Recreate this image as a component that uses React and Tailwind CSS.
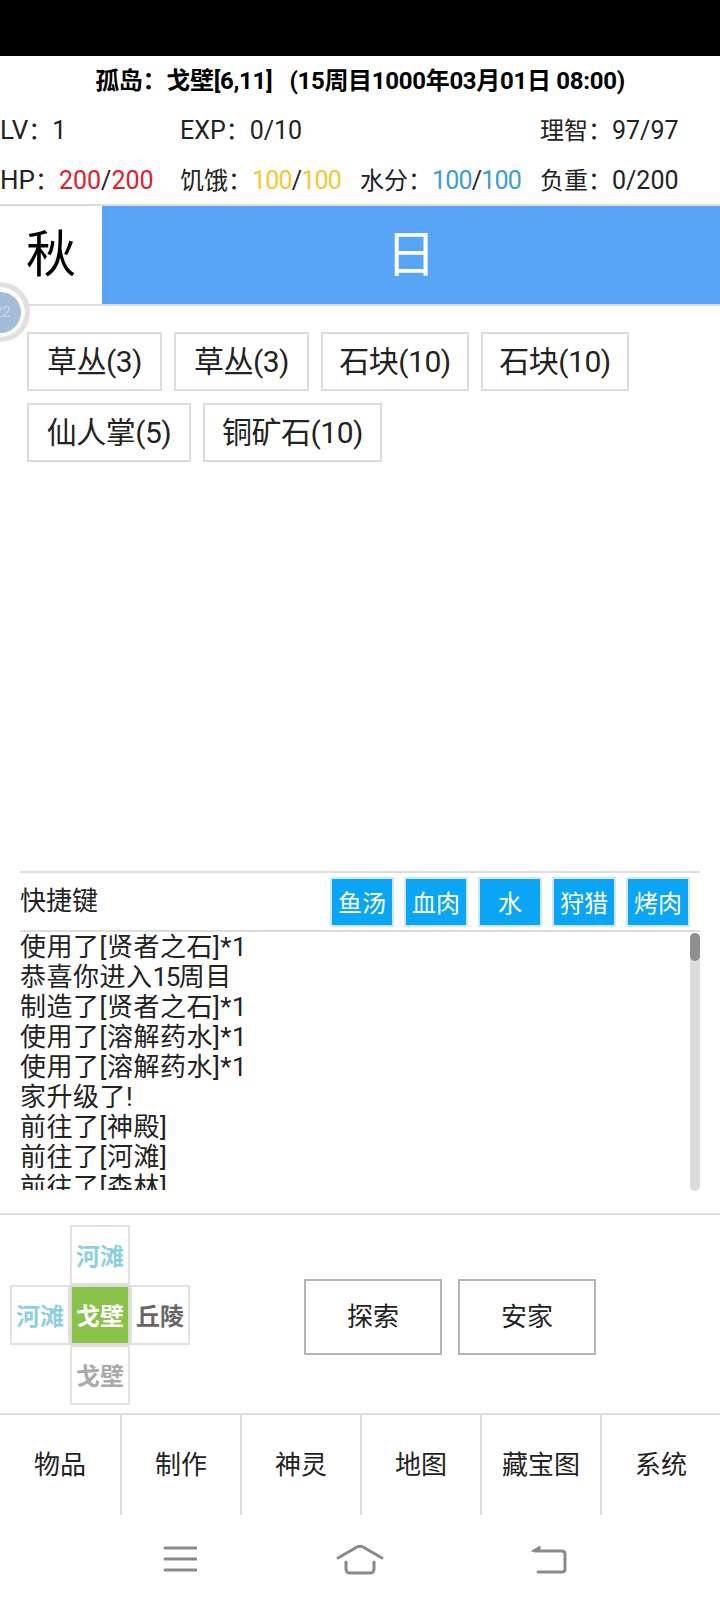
import React from "react";

const items = [
  [
    { t: "草丛(3)", w: "w-[135px]" },
    { t: "草丛(3)", w: "w-[135px]" },
    { t: "石块(10)", w: "w-[148px]" },
    { t: "石块(10)", w: "w-[148px]" },
  ],
  [
    { t: "仙人掌(5)", w: "w-[164px]" },
    { t: "铜矿石(10)", w: "w-[179px]" },
  ],
];
const shortcuts = ["鱼汤", "血肉", "水", "狩猎", "烤肉"];
const logs = [
  "使用了[贤者之石]*1",
  <>恭喜你进入<span className="tracking-[-1.5px]">15</span>周目</>,
  "制造了[贤者之石]*1",
  "使用了[溶解药水]*1",
  "使用了[溶解药水]*1",
  "家升级了!",
  "前往了[神殿]",
  "前往了[河滩]",
  "前往了[森林]",
];
const tabs = ["物品", "制作", "神灵", "地图", "藏宝图", "系统"];

const Stat = ({ label, value, max, color, tight }) => (
  <div className="w-[180px] whitespace-nowrap">
    {label}：
    <span className={tight ? "text-[25px] tracking-[-0.8px]" : "text-[25px]"}>
      <span className={color}>{value}</span>/<span className={color}>{max}</span>
    </span>
  </div>
);

const MapCell = ({ text, className }) => (
  <div className={`w-[60px] h-[60px] pt-[3px] flex items-center justify-center border-2 text-[24px] font-bold ${className}`}>
    {text}
  </div>
);

const App = () => {
  return (
    <div className="relative w-[720px] h-[1600px] bg-white overflow-hidden flex flex-col text-black font-['Roboto','Noto_Sans_CJK_SC',sans-serif]">
      <div className="h-14 bg-black shrink-0" />

      <div className="h-[48px] pt-[1px] flex items-center justify-center text-[24px] font-bold whitespace-pre tracking-[-0.3px]">
        孤岛：戈壁[6,11]{"   "}(15周目1000年03月01日 08:00)
      </div>
      <div className="h-[50px] pt-[3px] flex items-center text-[24px] text-[#222]">
        <div className="w-[180px]"><span className="text-[26px]">LV</span>：<span className="text-[25px]">1</span></div>
        <div className="w-[360px]"><span className="text-[25px]">EXP</span>：<span className="text-[25px]">0/10</span></div>
        <div className="w-[180px]">理智：<span className="text-[25px]">97/97</span></div>
      </div>
      <div className="h-[50px] pt-[3px] flex items-center text-[24px] text-[#222]">
        <Stat label={<span className="text-[26px]">HP</span>} value="200" max="200" color="text-[#e0202a]" />
        <Stat label="饥饿" value="100" max="100" color="text-[#f2c933]" tight />
        <Stat label="水分" value="100" max="100" color="text-[#3d9bdc]" tight />
        <div className="w-[180px]">负重：<span className="text-[25px]">0/200</span></div>
      </div>

      <div className="h-[102px] flex border-y-2 border-[#dddddd] shrink-0">
        <div className="w-[102px] flex items-center justify-center text-[50px]">秋</div>
        <div className="flex-1 bg-[#58a5f8] text-white flex items-center justify-center text-[50px]">日</div>
      </div>

      <div className="h-[565px] pt-[26px] pl-[27px] flex flex-col gap-3 shrink-0">
        {items.map((row, i) => (
          <div key={i} className="flex gap-3">
            {row.map((item, j) => (
              <div key={j} className={`${item.w} h-[59px] flex items-center justify-center border-2 border-[#dddddd] text-[30px] tracking-[-0.5px] text-[#222]`}>
                {item.t}
              </div>
            ))}
          </div>
        ))}
      </div>

      <div className="mx-5 h-[61px] border-y-2 border-[#dddddd] flex items-center justify-between pr-[10px] shrink-0">
        <div className="text-[26px] text-[#222] -mt-[1px]">快捷键</div>
        <div className="flex gap-[10px]">
          {shortcuts.map((s) => (
            <div key={s} className="w-[64px] h-[50px] pt-[4px] flex items-center justify-center bg-[#0aa5f5] border-2 border-[#cfe9f8] text-white text-[24px]">
              {s}
            </div>
          ))}
        </div>
      </div>

      <div className="mx-5 h-[259px] flex justify-between shrink-0">
        <div className="h-[258px] overflow-hidden text-[26px] leading-[30px] text-[#222] tracking-[0.5px]">
          {logs.map((l, i) => (
            <div key={i}>{l}</div>
          ))}
        </div>
        <div className="w-[10px] h-[258px] mt-[1px] rounded-full bg-[#dcdcdc]">
          <div className="h-7 rounded-full bg-[#8f8f8f]" />
        </div>
      </div>

      <div className="mt-[22px] h-[202px] border-y-2 border-[#dddddd] flex items-start shrink-0">
        <div className="mt-[10px] ml-[10px] w-[180px] grid grid-cols-3">
          <div />
          <MapCell text="河滩" className="border-[#e2e2e2] text-[#8fcfe0]" />
          <div />
          <MapCell text="河滩" className="border-[#e2e2e2] text-[#8fcfe0]" />
          <MapCell text="戈壁" className="border-[#dcdcd0] bg-[#8bc34a] text-white" />
          <MapCell text="丘陵" className="border-[#e2e2e2] text-[#666666]" />
          <div />
          <MapCell text="戈壁" className="border-[#e2e2e2] text-[#aaaaaa]" />
          <div />
        </div>
        <div className="mt-[64px] ml-[114px] flex gap-4">
          <div className="w-[138px] h-[76px] flex items-center justify-center border-2 border-[#b4b4b4] text-[26px] text-[#222]">探索</div>
          <div className="w-[138px] h-[76px] flex items-center justify-center border-2 border-[#b4b4b4] text-[26px] text-[#222]">安家</div>
        </div>
      </div>

      <div className="h-[100px] flex shrink-0">
        {tabs.map((t, i) => (
          <div key={t} className={`w-[120px] flex items-center justify-center text-[26px] text-[#222] ${i > 0 ? "border-l-2 border-[#dddddd]" : ""}`}>
            {t}
          </div>
        ))}
      </div>

      <div className="flex-1 flex items-center pl-[163px] pt-[2px]">
        <svg width="34" height="30" viewBox="0 0 34 30" fill="none" stroke="#8a8a8a" strokeWidth="3" strokeLinecap="round">
          <path d="M2 4H33M2 15H33M2 26H33" />
        </svg>
        <svg className="ml-[138px]" width="50" height="32" viewBox="0 0 50 32" fill="none" stroke="#8a8a8a" strokeWidth="3" strokeLinecap="round" strokeLinejoin="round">
          <path d="M3 15L22 4Q25 2.5 28 4L47 15" />
          <path d="M11 19V26Q11 30 15 30H35Q39 30 39 26V19" />
        </svg>
        <svg className="ml-[145px]" width="38" height="32" viewBox="0 0 38 32" fill="none" stroke="#8a8a8a" strokeWidth="3" strokeLinecap="round" strokeLinejoin="round">
          <path d="M5 8H32Q35 8 35 11V26Q35 29 32 29H8" />
          <path d="M2 8L10 3V8Z" fill="#8a8a8a" strokeWidth="1" />
        </svg>
      </div>

      {/* floating assistive ball */}
      <div className="absolute left-[-30px] top-[282px] w-[60px] h-[60px] rounded-full bg-[#dddddd]/90 flex items-center justify-center">
        <div className="w-[50px] h-[50px] rounded-full bg-white/90 flex items-center justify-center">
          <div className="w-[41px] h-[41px] rounded-full bg-[#a3bcd8] flex items-center justify-end text-[15px] text-[#c9d7e7] pr-[10px]">
            22
          </div>
        </div>
      </div>
    </div>
  );
};

export default App;
